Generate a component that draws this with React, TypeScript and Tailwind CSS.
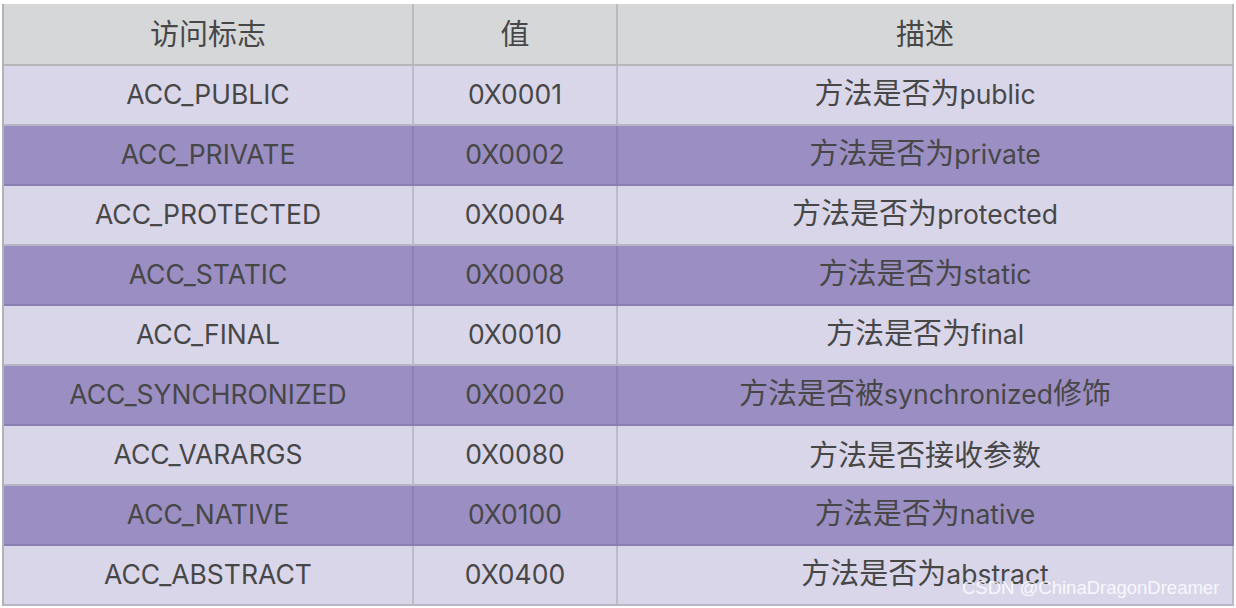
import React from "react";

const rows: [string, string, string][] = [
  ["ACC_PUBLIC", "0X0001", "方法是否为public"],
  ["ACC_PRIVATE", "0X0002", "方法是否为private"],
  ["ACC_PROTECTED", "0X0004", "方法是否为protected"],
  ["ACC_STATIC", "0X0008", "方法是否为static"],
  ["ACC_FINAL", "0X0010", "方法是否为final"],
  ["ACC_SYNCHRONIZED", "0X0020", "方法是否被synchronized修饰"],
  ["ACC_VARARGS", "0X0080", "方法是否接收参数"],
  ["ACC_NATIVE", "0X0100", "方法是否为native"],
  ["ACC_ABSTRACT", "0X0400", "方法是否为abstract"],
];

const font = { fontFamily: 'Inter, "Noto Sans CJK SC", sans-serif' };

function Txt({ s }: { s: string }) {
  const parts = s.match(/[\u4e00-\u9fff]+|[^\u4e00-\u9fff]+/g) || [];
  const hasCjk = /[\u4e00-\u9fff]/.test(s);
  const hasLatin = /[^\u4e00-\u9fff]/.test(s);
  const mixed = hasCjk && hasLatin;
  return (
    <span
      className={
        mixed
          ? "whitespace-nowrap leading-none -translate-y-[3px]"
          : "whitespace-nowrap leading-none -translate-y-[1px]"
      }
    >
      {parts.map((p, i) =>
        /[\u4e00-\u9fff]/.test(p) ? (
          <span key={i} className="text-[29px] leading-none" style={{ fontFamily: '"Noto Sans CJK SC", sans-serif' }}>
            {p}
          </span>
        ) : (
          <span key={i} className="leading-none">{p}</span>
        )
      )}
    </span>
  );
}

export default function App() {
  return (
    <div className="relative w-[1236px] h-[608px] bg-white overflow-hidden" style={font}>
      <div className="ml-[2px] mt-[4px] w-[1232px] border-l-2 border-[#b3b3b3] text-[26.5px] text-[#474747]">
        <div className="grid grid-cols-[410px_204px_616px] h-[62px] bg-[#d6d7d8] border-b-2 border-[#b6b6b6]">
          <div className="flex items-center justify-center border-r-2 border-[#bcbcbc]"><Txt s="访问标志" /></div>
          <div className="flex items-center justify-center border-r-2 border-[#bcbcbc]"><Txt s="值" /></div>
          <div className="flex items-center justify-center border-r-2 border-[#bcbcbc]"><Txt s="描述" /></div>
        </div>
        {rows.map((r, i) => {
          const dark = i % 2 === 1;
          return (
            <div
              key={r[0]}
              className={
                dark
                  ? "grid grid-cols-[410px_204px_616px] h-[60px] bg-[#9b8ec2] border-b-2 border-[#8a7fb0]"
                  : "grid grid-cols-[410px_204px_616px] h-[60px] bg-[#d9d6ea] border-b-2 border-[#b8b6c4]"
              }
            >
              {r.map((c, j) => (
                <div
                  key={j}
                  className={
                    dark
                      ? "flex items-center justify-center border-r-2 border-[#8c80b4]"
                      : "flex items-center justify-center border-r-2 border-[#bdbbca]"
                  }
                >
                  <Txt s={c} />
                </div>
              ))}
            </div>
          );
        })}
      </div>
      <div
        className="absolute left-[962px] top-[577px] text-[18.5px] leading-[22px] text-white/80"
        style={{ fontFamily: '"Liberation Sans", Arial, sans-serif' }}
      >
        CSDN @ChinaDragonDreamer
      </div>
    </div>
  );
}
